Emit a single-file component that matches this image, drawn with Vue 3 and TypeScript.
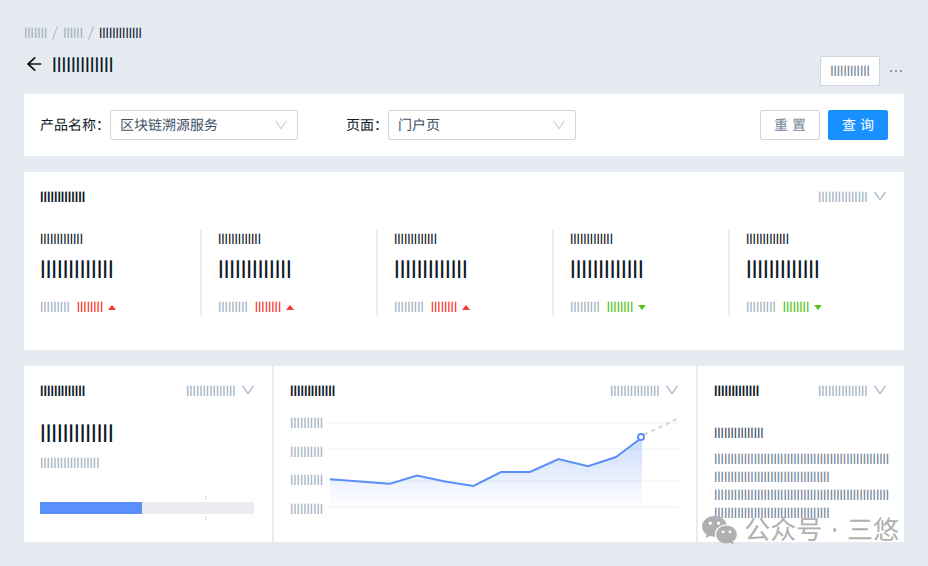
<script setup lang="ts">
import { ref } from 'vue'

type Trend = 'up' | 'down'

interface Stat {
  id: number
  trend: Trend
}

const bars = (count: number): string => 'l'.repeat(count)

const product = ref('区块链溯源服务')
const pageName = ref('门户页')
const progress = ref(47.7)

const stats: Stat[] = [
  { id: 1, trend: 'up' },
  { id: 2, trend: 'up' },
  { id: 3, trend: 'up' },
  { id: 4, trend: 'down' },
  { id: 5, trend: 'down' },
]

const gridLines: number[] = [7, 33, 65, 91]
const points = '0,63.3 60,67.7 87,59.6 115,65.6 143.5,70 171,56 200,56 228.5,43 258,50.3 286,41 312,21.5'

function reset(): void {
  product.value = '区块链溯源服务'
  pageName.value = '门户页'
}
</script>

<template>
  <main class="page" lang="zh-CN">
    <header class="header">
      <div>
        <nav class="crumbs" aria-label="breadcrumb">
          <a href="#">{{ bars(7) }}</a>
          <svg class="slash" viewBox="0 0 6 14"><path d="M5.4 .5L.6 13.5" /></svg>
          <a href="#">{{ bars(6) }}</a>
          <svg class="slash" viewBox="0 0 6 14"><path d="M5.4 .5L.6 13.5" /></svg>
          <span class="current">{{ bars(13) }}</span>
        </nav>
        <div class="title-row">
          <button class="back" type="button" aria-label="back">
            <svg viewBox="0 0 16 16"><path d="M15.2 8H2M9.3 1.3L2 8l7.3 6.7" /></svg>
          </button>
          <h1>{{ bars(13) }}</h1>
        </div>
      </div>
      <div class="actions">
        <button class="btn extra" type="button">{{ bars(12) }}</button>
        <button class="more" type="button" aria-label="more">
          <svg viewBox="0 0 12 4"><path d="M0 1h2v2H0zM5 1h2v2H5zM10 1h2v2h-2z" /></svg>
        </button>
      </div>
    </header>

    <form class="card filters" @submit.prevent>
      <div class="field">
        <label for="product">产品名称：</label>
        <div class="select-box">
          <select id="product" v-model="product">
            <option>区块链溯源服务</option>
          </select>
          <svg class="chevron" viewBox="0 0 12 10"><path d="M.5 .8L6 8.6l5.5-7.8" /></svg>
        </div>
      </div>
      <div class="field">
        <label for="page">页面：</label>
        <div class="select-box">
          <select id="page" v-model="pageName">
            <option>门户页</option>
          </select>
          <svg class="chevron" viewBox="0 0 12 10"><path d="M.5 .8L6 8.6l5.5-7.8" /></svg>
        </div>
      </div>
      <div class="form-actions">
        <button class="btn" type="button" @click="reset">重 置</button>
        <button class="btn primary" type="submit">查 询</button>
      </div>
    </form>

    <section class="card overview">
      <div class="card-head">
        <h2>{{ bars(13) }}</h2>
        <div class="range">
          <select aria-label="range"><option>{{ bars(15) }}</option></select>
          <svg class="chevron" viewBox="0 0 12 10"><path d="M.5 .8L6 8.6l5.5-7.8" /></svg>
        </div>
      </div>
      <div class="stats">
        <div v-for="stat in stats" :key="stat.id" class="stat">
          <div class="stat-label">{{ bars(13) }}</div>
          <div class="figure">{{ bars(13) }}</div>
          <div class="stat-foot">
            <span class="muted">{{ bars(9) }}</span>
            <span :class="['trend', stat.trend]">
              {{ bars(8) }}
              <svg viewBox="0 0 8 5"><path d="M0 5L4 0l4 5z" /></svg>
            </span>
          </div>
        </div>
      </div>
    </section>

    <section class="card panels">
      <article class="panel">
        <div class="card-head">
          <h2>{{ bars(13) }}</h2>
          <div class="range">
            <select aria-label="range"><option>{{ bars(15) }}</option></select>
            <svg class="chevron" viewBox="0 0 12 10"><path d="M.5 .8L6 8.6l5.5-7.8" /></svg>
          </div>
        </div>
        <div class="figure total">{{ bars(13) }}</div>
        <div class="muted note">{{ bars(18) }}</div>
        <div class="progress" role="progressbar" :aria-valuenow="progress">
          <div class="progress-fill" :style="{ width: progress + '%' }"></div>
          <i class="target"></i>
        </div>
      </article>

      <article class="panel">
        <div class="card-head">
          <h2>{{ bars(13) }}</h2>
          <div class="range">
            <select aria-label="range"><option>{{ bars(15) }}</option></select>
            <svg class="chevron" viewBox="0 0 12 10"><path d="M.5 .8L6 8.6l5.5-7.8" /></svg>
          </div>
        </div>
        <div class="chart">
          <div class="axis">
            <span v-for="n in 4" :key="n">{{ bars(10) }}</span>
          </div>
          <svg class="plot" viewBox="0 0 348 100" preserveAspectRatio="none">
            <defs>
              <linearGradient id="fill" x1="0" y1="21" x2="0" y2="91" gradientUnits="userSpaceOnUse">
                <stop offset="0" stop-color="#5b8ff9" stop-opacity=".32" />
                <stop offset="1" stop-color="#5b8ff9" stop-opacity="0" />
              </linearGradient>
            </defs>
            <path v-for="y in gridLines" :key="y" class="grid-line" :d="`M0 ${y}H348`" />
            <polygon :points="`0,91 ${points} 312,91`" fill="url(#fill)" />
            <polyline class="line" :points="points" />
            <path class="forecast" d="M314 18.5L348 2.5" />
            <circle class="dot" cx="311" cy="21" r="3" />
          </svg>
        </div>
      </article>

      <article class="panel">
        <div class="card-head">
          <h2>{{ bars(13) }}</h2>
          <div class="range">
            <select aria-label="range"><option>{{ bars(15) }}</option></select>
            <svg class="chevron" viewBox="0 0 12 10"><path d="M.5 .8L6 8.6l5.5-7.8" /></svg>
          </div>
        </div>
        <h3>{{ bars(15) }}</h3>
        <p>{{ bars(53) }}<br />{{ bars(35) }}</p>
        <p>{{ bars(53) }}<br />{{ bars(35) }}</p>
      </article>

      <div class="watermark">
        <svg viewBox="0 0 36 30">
          <path d="M12.5 0C5.6 0 0 4.7 0 10.6c0 3.3 1.8 6.200 4.700 8.100L3.600 22.300l4.200-2.200c1.500.5 3.100.7 4.700.7h.8C11.500 14 17 8.700 24 8.500h.8C23.600 3.500 18.500 0 12.500 0z" />
          <path d="M24.500 9.500c-5.700 0-10.300 3.900-10.300 8.900s4.600 9 10.300 9c1.300 0 2.500-.2 3.600-.6l3.700 2-.9-3.300c2.400-1.700 3.900-4.200 3.900-7.100 0-5-4.600-8.900-10.300-8.900z" />
          <g fill="#fff">
            <circle cx="8.300" cy="7.200" r="1.600" /><circle cx="16.600" cy="7.200" r="1.600" />
            <circle cx="21" cy="15.800" r="1.400" /><circle cx="28" cy="15.800" r="1.400" />
          </g>
        </svg>
        <span>公众号 · 三悠</span>
      </div>
    </section>
  </main>
</template>

<style>
body {
  margin: 0;
  background: #e6ebf2;
}
</style>

<style scoped>
.page {
  box-sizing: border-box;
  min-height: 100vh;
  padding: 24px;
  background: #e6ebf2;
  color: #0f1b29;
  font-family: Lato, "Noto Sans CJK SC", sans-serif;
  font-size: 14px;
  line-height: 18px;
  text-rendering: geometricPrecision;
}

h1, h2, h3, p {
  margin: 0;
  font-size: 14px;
  font-weight: 400;
}

svg {
  display: block;
  flex: none;
}

button, select {
  box-sizing: border-box;
  margin: 0;
  padding: 0;
  border: 0;
  background: none;
  color: inherit;
  font: inherit;
  text-rendering: inherit;
  appearance: none;
  cursor: pointer;
}

.header {
  display: flex;
  justify-content: space-between;
  align-items: flex-end;
  padding-bottom: 8px;
}

.crumbs {
  display: flex;
  align-items: center;
  gap: 5px;
  color: #a3b3c2;
}

.crumbs a {
  color: inherit;
  text-decoration: none;
}

.current {
  color: #17263a;
}

.slash {
  width: 6px;
  height: 14px;
  fill: none;
  stroke: #a3b3c2;
}

.title-row {
  display: flex;
  align-items: center;
  gap: 10px;
  height: 44px;
}

.back svg {
  width: 16px;
  height: 16px;
  margin-left: 2px;
  fill: none;
  stroke: #111;
  stroke-width: 1.7;
}

h1 {
  padding-top: 2px;
  font-size: 20px;
}

.actions {
  display: flex;
  align-items: center;
  gap: 10px;
}

.btn {
  width: 60px;
  height: 30px;
  border: 1px solid #cdd4dc;
  border-radius: 2px;
  background: #fff;
  color: #74869a;
}

.filters .btn {
  font-family: "Liberation Sans", "Noto Sans CJK SC", sans-serif;
}

.btn.primary {
  border-color: #1890ff;
  background: #1890ff;
  color: #fff;
}

.more svg {
  width: 12px;
  height: 4px;
  margin-right: 2px;
  fill: #8c9bab;
}

.card {
  background: #fff;
}

.card + .card {
  margin-top: 16px;
}

.filters {
  display: flex;
  align-items: center;
  gap: 48px;
  padding: 16px;
}

.field {
  display: flex;
  align-items: center;
}

.field label {
  font-family: "Noto Sans CJK SC", sans-serif;
}

.select-box {
  position: relative;
}

.select-box select {
  width: 188px;
  height: 30px;
  padding: 0 32px 0 9px;
  border: 1px solid #cdd4dc;
  border-radius: 2px;
  color: #3f5366;
}

.chevron {
  width: 12px;
  height: 10px;
  fill: none;
  stroke: #a9b7c5;
  stroke-width: 1.3;
  pointer-events: none;
}

.select-box .chevron {
  position: absolute;
  top: 10px;
  right: 11px;
  stroke: #cdd4dc;
}

.form-actions {
  display: flex;
  gap: 8px;
  margin-left: auto;
}

.card-head {
  display: flex;
  justify-content: space-between;
  align-items: center;
}

h2 {
  font-weight: 700;
}

.range {
  display: flex;
  align-items: center;
  gap: 6px;
}

.range select {
  color: #a3b3c2;
}

.range .chevron {
  margin-bottom: 2px;
}

.overview {
  padding: 16px 16px 34px;
}

.overview .range {
  margin-right: 2px;
}

.stats {
  display: grid;
  grid-template-columns: 162fr 176fr 176fr 176fr 158fr;
  margin-top: 24px;
}

.stat {
  border-right: 2px solid #ebecf0;
  padding-left: 16px;
}

.stat:first-child {
  padding-left: 0;
}

.stat:last-child {
  border-right: 0;
}

.figure {
  margin-top: 7px;
  font-size: 24px;
  line-height: 30px;
}

.stat-foot {
  display: flex;
  gap: 7px;
  margin-top: 13px;
}

.muted, .axis {
  color: #a3b3c2;
}

.trend {
  display: flex;
  align-items: center;
  gap: 5px;
}

.trend svg {
  width: 8px;
  height: 5px;
  margin-top: 1px;
  fill: currentColor;
}

.up {
  color: #f5392d;
}

.down {
  color: #52c41a;
}

.down svg {
  transform: rotate(180deg);
}

.panels {
  position: relative;
  display: grid;
  grid-template-columns: 250fr 424fr 206fr;
}

.panel {
  min-width: 0;
  padding: 16px 18px 20px 16px;
  border-right: 2px solid #ebecf0;
}

.panel:nth-child(3) {
  border-right: 0;
}

.total {
  margin-top: 19px;
}

.note {
  margin-top: 5px;
}

.progress {
  position: relative;
  height: 12px;
  margin-top: 30px;
  background: #ebecf0;
}

.progress-fill {
  height: 100%;
  background: #5b8ff9;
}

.target {
  box-sizing: border-box;
  position: absolute;
  top: -6px;
  left: 77%;
  width: 2px;
  height: 24px;
  border: solid #ebecf0;
  border-width: 4px 0;
}

.chart {
  display: flex;
  gap: 8px;
  margin-top: 14px;
}

.axis {
  display: flex;
  flex: none;
  flex-direction: column;
  justify-content: space-between;
  width: 32px;
  height: 104px;
}

.plot {
  flex: 1;
  min-width: 0;
  height: 100px;
  margin-top: 2px;
}

.grid-line {
  stroke: #f6f7f9;
  stroke-width: 2;
}

.line {
  fill: none;
  stroke: #5b8ff9;
  stroke-width: 2;
}

.forecast {
  fill: none;
  stroke: #cdd2d9;
  stroke-width: 2;
  stroke-dasharray: 4 4;
}

.dot {
  fill: #fff;
  stroke: #5b8ff9;
  stroke-width: 2;
}

h3 {
  margin-top: 24px;
  color: #3f5366;
}

p {
  color: #74869a;
  white-space: nowrap;
}

h3 + p {
  margin-top: 8px;
}

.watermark {
  position: absolute;
  right: 5px;
  bottom: -4px;
  display: flex;
  align-items: center;
  gap: 6px;
  color: #b0b0b0;
  font-family: "DejaVu Sans", "Noto Sans CJK SC", sans-serif;
  font-size: 26px;
  line-height: 30px;
}

.watermark svg {
  width: 36px;
  height: 30px;
  fill: #b0b0b0;
}
</style>
